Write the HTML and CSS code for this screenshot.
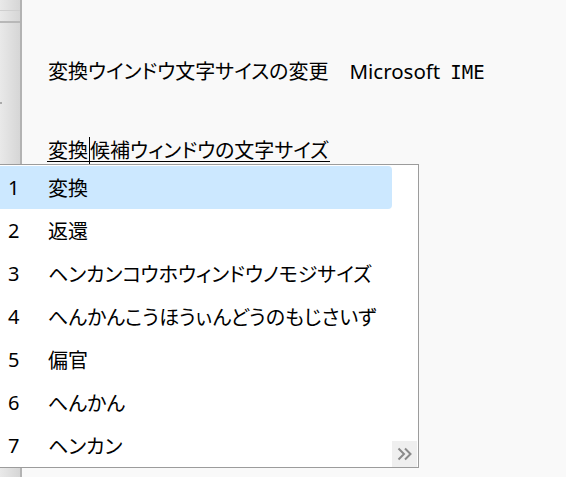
FILE: index.html
```html
<!DOCTYPE html>
<html lang="ja">
<head>
<meta charset="utf-8">
<link rel="stylesheet" href="styles.css">
</head>
<body>
<div class="window">
  <div class="strip">
    <div class="strip-line1"></div>
    <div class="strip-line2"></div>
    <div class="strip-dot"></div>
  </div>
  <div class="doc">
    <p class="line1"><span class="jp">変換ウインドウ文字サイスの変更</span><span class="latin">Microsoft</span><span class="mono">IME</span></p>
    <div class="line2"><span class="comp">変換<span class="caret"></span>候補ウィンドウの文字サイズ</span></div>
  </div>
  <div class="cand">
    <ol class="list">
      <li class="row sel"><span class="num">1</span><span class="word">変換</span></li>
      <li class="row"><span class="num">2</span><span class="word">返還</span></li>
      <li class="row"><span class="num">3</span><span class="word">ヘンカンコウホウィンドウノモジサイズ</span></li>
      <li class="row"><span class="num">4</span><span class="word">へんかんこうほうぃんどうのもじさいず</span></li>
      <li class="row"><span class="num">5</span><span class="word">偏官</span></li>
      <li class="row"><span class="num">6</span><span class="word">へんかん</span></li>
      <li class="row"><span class="num">7</span><span class="word">ヘンカン</span></li>
    </ol>
    <div class="more">
      <svg width="16" height="14" viewBox="0 0 16 14"><path d="M1.5 1.5 L7 7 L1.5 12.5 M8 1.5 L13.5 7 L8 12.5" fill="none" stroke="#8a8a8a" stroke-width="2"/></svg>
    </div>
  </div>
</div>
</body>
</html>
```

FILE: styles.css
```css
* { box-sizing: border-box; }
html, body { margin: 0; padding: 0; }
body {
  width: 566px;
  height: 477px;
  overflow: hidden;
  background: #f9f9f9;
  font-family: "Noto Sans CJK JP", "Noto Sans", sans-serif;
  color: #000;
}
.window {
  position: relative;
  display: flex;
  height: 477px;
}
.strip {
  position: relative;
  width: 22px;
  flex: none;
  background: linear-gradient(to right, #e9e9e9, #d6d6d6);
  border-right: 2px solid #b3b3b3;
}
.strip-line1 {
  position: absolute;
  left: 0; right: 0; top: 10px;
  height: 1px;
  background: #cfcfcf;
}
.strip-line2 {
  position: absolute;
  left: 0; right: 0; top: 21px;
  height: 2px;
  background: #b8b8b8;
}
.strip-dot {
  position: absolute;
  left: 0; top: 102px;
  width: 2px; height: 2px;
  background: #aaa;
}
.doc {
  padding-left: 26px;
  font-size: 20px;
  font-feature-settings: "palt";
}
.line1 {
  margin: 57px 0 0;
  line-height: 28px;
  white-space: nowrap;
}
.line2 {
  margin-top: 52px;
  line-height: 23px;
  white-space: nowrap;
}
.latin {
  font-family: "Noto Sans", sans-serif;
  margin-left: 21px;
  font-size: 20.5px;
}
.mono {
  font-family: "DejaVu Sans Mono", monospace;
  font-size: 19px;
  margin-left: 10px;
}
.comp {
  display: inline-block;
  border-bottom: 1px solid #000;
  line-height: 23px;
  padding-right: 1px;
  margin-left: -1px;
  padding-left: 1px;
}
.caret {
  display: inline-block;
  width: 1px;
  height: 27px;
  background: #000;
  vertical-align: top;
  margin: -1px 0 -3px 1px;
}
.cand {
  position: absolute;
  left: 0;
  top: 164px;
  width: 419px;
  height: 304px;
  background: #fff;
  border: 1px solid #9c9c9c;
  border-left: none;
  padding-top: 1px;
}
.list {
  list-style: none;
  margin: 0;
  padding: 0;
  width: 392px;
}
.row {
  display: flex;
  align-items: center;
  height: 43px;
  font-size: 20px;
  font-feature-settings: "palt";
  white-space: nowrap;
}
.row.sel {
  background: #cce8ff;
  border-radius: 0 4px 4px 0;
}
.num {
  font-family: "Noto Sans", sans-serif;
  width: 48px;
  padding-left: 8px;
  font-size: 20px;
}
.more {
  position: absolute;
  right: 1px;
  bottom: 0;
  width: 25px;
  height: 26px;
  background: #efefef;
  display: flex;
  align-items: center;
  justify-content: center;
}
```
